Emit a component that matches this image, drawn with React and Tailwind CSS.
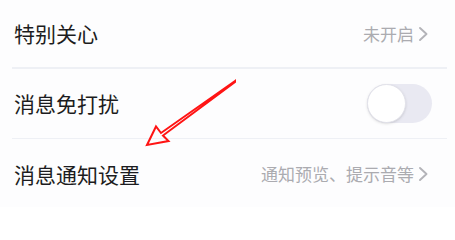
import React from "react";

function Chevron() {
  return (
    <svg width="11" height="16" viewBox="0 0 11 16" className="ml-[4px]">
      <path d="M2 2 L8.5 8 L2 14" fill="none" stroke="#b3b3b8" strokeWidth="1.9" strokeLinecap="round" strokeLinejoin="round" />
    </svg>
  );
}

function Toggle() {
  return (
    <div className="w-[65px] h-[39px] rounded-full bg-[#e9e9f2] relative">
      <div className="absolute left-0 top-0 w-[39px] h-[39px] rounded-full bg-white border border-[#e2e2ea] shadow-sm" />
    </div>
  );
}

function Row({ title, right, h }) {
  return (
    <div className={`flex items-center justify-between pl-[2px] pr-[18px] ${h}`}>
      <span className="text-[21px] text-[#1c1c20] leading-none">{title}</span>
      {right}
    </div>
  );
}

export default function App() {
  return (
    <div
      className="relative w-[455px] h-[207px] bg-[#fdfdfe] overflow-hidden"
      style={{ fontFamily: '"Noto Sans CJK SC", "Noto Sans", sans-serif' }}
    >
      <div className="ml-[12px] mr-[8px] flex flex-col">
        <Row
          title="特别关心"
          h="h-[67px]"
          right={
            <div className="flex items-center text-[17px] text-[#ababb0]">
              未开启
              <Chevron />
            </div>
          }
        />
        <div className="h-[1.5px] bg-[#eef0f5]" />
        <Row title="消息免打扰" h="h-[69px]" right={<div className="-mr-[3px]"><Toggle /></div>} />
        <div className="h-[1.5px] bg-[#eef0f5]" />
        <Row
          title="消息通知设置"
          h="h-[70px]"
          right={
            <div className="flex items-center text-[17px] text-[#ababb0]">
              通知预览、提示音等
              <Chevron />
            </div>
          }
        />
      </div>
      <svg className="absolute left-0 top-0" width="455" height="207" viewBox="0 0 455 207">
        <polygon
          points="235,81 161,133 156,126.5 147,145 168.5,141 163,135.5 235,82"
          fill="none"
          stroke="#ff1414"
          strokeWidth="2"
          strokeLinejoin="miter"
        />
      </svg>
    </div>
  );
}
